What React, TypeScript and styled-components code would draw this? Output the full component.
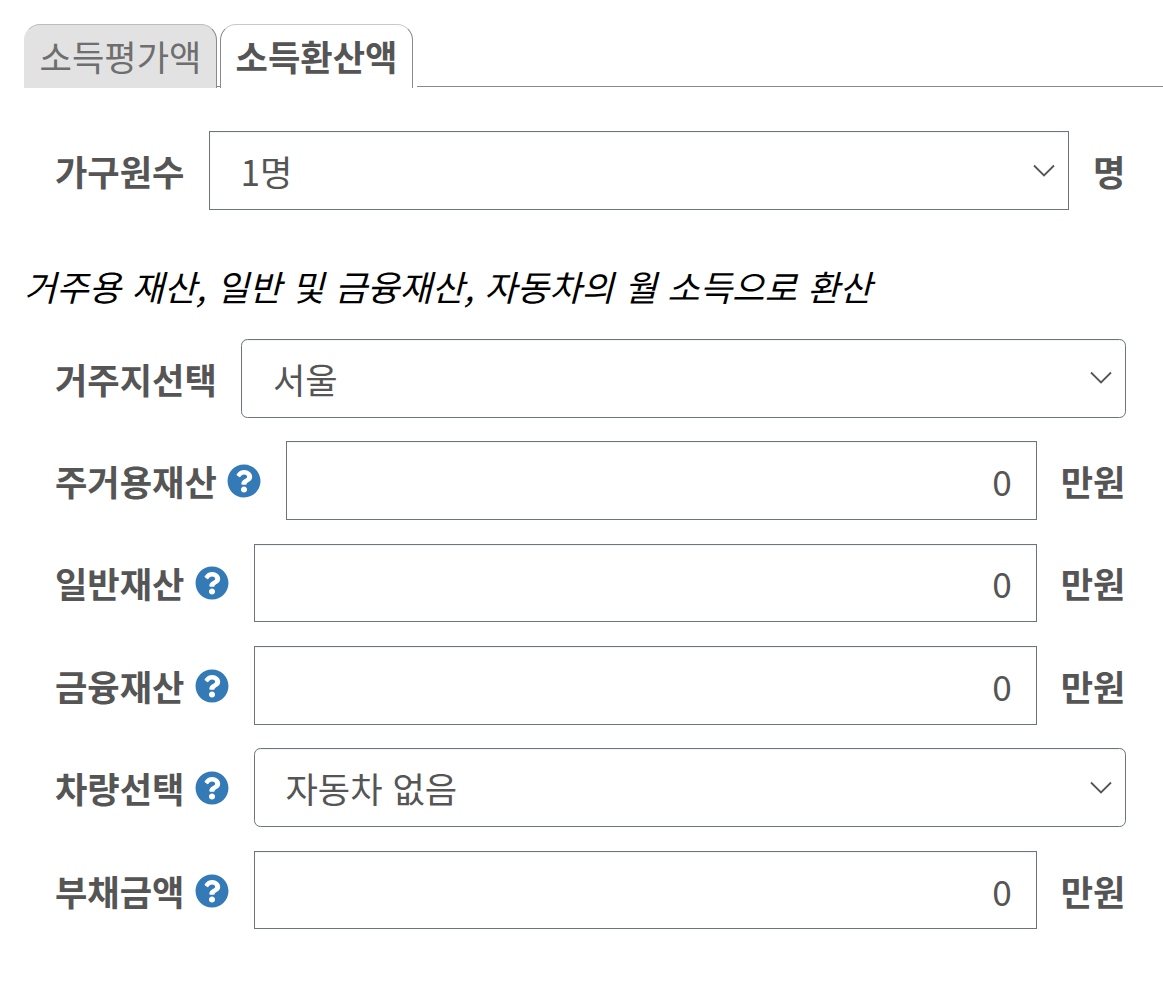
import React from "react";
import styled, { createGlobalStyle } from "styled-components";
import { FaQuestionCircle } from "react-icons/fa";

const Global = createGlobalStyle`
  html, body { margin: 0; padding: 0; background: #fff; }
  body { font-family: "Noto Sans CJK KR", "Noto Sans", sans-serif; color: #555; word-spacing: 2px; }
`;

const Page = styled.div`
  width: 1163px;
  height: 985px;
  box-sizing: border-box;
  padding: 24px 37px 0 24px;
  overflow: hidden;
`;

const TabBar = styled.div`
  display: flex;
  align-items: flex-end;
  height: 64px;
  margin-right: -37px;
  margin-bottom: 43.2px;
`;

const Tab = styled.div<{ $active?: boolean }>`
  box-sizing: border-box;
  flex: none;
  width: 193px;
  height: 64px;
  padding-bottom: 2px;
  display: flex;
  align-items: center;
  justify-content: center;
  font-size: 35.2px;
  line-height: 1;
  border: 1px solid ${(p) => (p.$active ? "#c8c8c8" : "#bdbdbd")};
  border-bottom: 0;
  border-radius: 16px 16px 0 0;
  background: ${(p) => (p.$active ? "#fff" : "#e2e2e2")};
  font-weight: ${(p) => (p.$active ? 700 : 400)};
  color: ${(p) => (p.$active ? "#555" : "#6e6e6e")};
  border-left-color: ${(p) => (p.$active ? "#8a8a8a" : "#e2e2e2")};
  border-right-color: #8a8a8a;
`;

const TabGap = styled.div`
  flex: none;
  width: 3px;
  height: 2px;
  margin-bottom: 1px;
  border-bottom: 1px solid #8a8a8a;
  box-sizing: border-box;
`;

const TabLine = styled.div`
  flex: 1;
  margin-left: 4px;
  height: 2px;
  margin-bottom: 1px;
  border-bottom: 1px solid #8a8a8a;
  box-sizing: border-box;
`;

const Row = styled.div`
  display: flex;
  align-items: center;
  gap: 24px;
  height: 78.75px;
  padding-left: 31px;
  margin-bottom: 23.65px;
`;

const HouseholdRow = styled(Row)`
  margin-bottom: 56.35px;
`;

const Label = styled.div`
  display: flex;
  align-items: center;
  gap: 10.5px;
  flex: none;
  font-size: 35.2px;
  font-weight: 700;
  line-height: 1;
  color: #555;
  white-space: nowrap;
`;

const Help = styled(FaQuestionCircle)`
  width: 34px;
  height: 34px;
  margin: 1px 0.5px 0 0;
  color: #337ab7;
  flex: none;
`;

const Field = styled.div<{ $round?: boolean }>`
  flex: 1;
  min-width: 0;
  height: 100%;
  box-sizing: border-box;
  display: flex;
  align-items: center;
  justify-content: space-between;
  border: 1px solid #6c757d;
  border-radius: ${(p) => (p.$round ? "6.4px" : "0")};
  padding: 0 13px 0 31px;
  font-size: 35.2px;
  color: #555;
  box-shadow: inset 0 1px 1px rgba(0, 0, 0, 0.05);
`;

const Value = styled.span`
  line-height: 1;
  white-space: nowrap;
`;

const InputField = styled(Field)`
  justify-content: flex-end;
  padding: 0 24px 0 0;
`;

const Chevron = styled.svg`
  width: 22px;
  height: 13px;
  flex: none;
  fill: none;
  stroke: #555;
  stroke-width: 1.8;
  margin-top: -1px;
`;

const Unit = styled.div`
  flex: none;
  padding-right: 0.6px;
  font-size: 35.2px;
  font-weight: 700;
  line-height: 1;
  color: #555;
  white-space: nowrap;
`;

const Note = styled.p`
  margin: 0 0 33.5px 0;
  height: 39px;
  display: flex;
  align-items: center;
  font-size: 35.2px;
  font-style: italic;
  line-height: 1;
  word-spacing: 2.6px;
  color: #000;
  white-space: nowrap;
`;

const Selector = ({ children, round }: { children: React.ReactNode; round?: boolean }) => (
  <Field $round={round}>
    <Value>{children}</Value>
    <Chevron viewBox="0 0 22 13">
      <path d="M1 1.5l10 10 10-10" />
    </Chevron>
  </Field>
);

const Amount = () => (
  <>
    <InputField>
      <Value>0</Value>
    </InputField>
    <Unit>만원</Unit>
  </>
);

export default function App() {
  return (
    <Page>
      <Global />
      <TabBar>
        <Tab>소득평가액</Tab>
        <TabGap />
        <Tab $active>소득환산액</Tab>
        <TabLine />
      </TabBar>
      <HouseholdRow>
        <Label>가구원수</Label>
        <Selector>1명</Selector>
        <Unit>명</Unit>
      </HouseholdRow>
      <Note>거주용 재산, 일반 및 금융재산, 자동차의 월 소득으로 환산</Note>
      <Row>
        <Label>거주지선택</Label>
        <Selector round>서울</Selector>
      </Row>
      <Row>
        <Label>주거용재산<Help /></Label>
        <Amount />
      </Row>
      <Row>
        <Label>일반재산<Help /></Label>
        <Amount />
      </Row>
      <Row>
        <Label>금융재산<Help /></Label>
        <Amount />
      </Row>
      <Row>
        <Label>차량선택<Help /></Label>
        <Selector round>자동차 없음</Selector>
      </Row>
      <Row>
        <Label>부채금액<Help /></Label>
        <Amount />
      </Row>
    </Page>
  );
}
